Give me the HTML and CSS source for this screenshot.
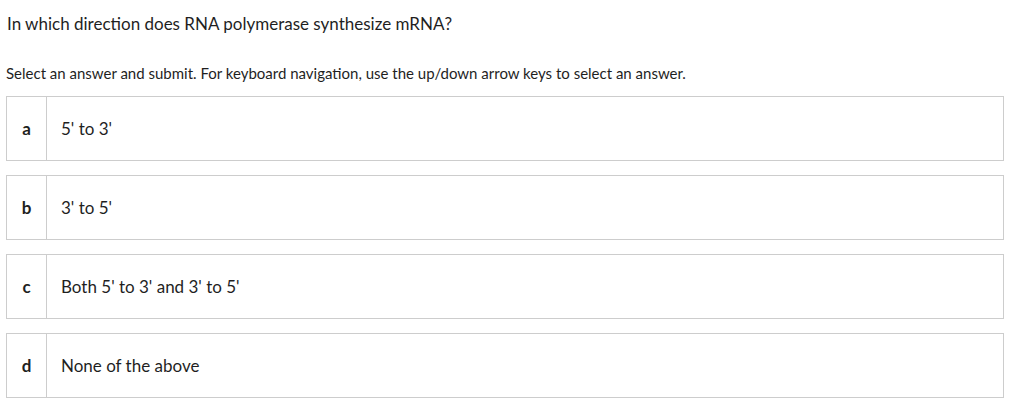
FILE: index.html
```html
<!DOCTYPE html>
<html lang="en">
<head>
<meta charset="utf-8">
<title>Question</title>
<link rel="stylesheet" href="styles.css">
</head>
<body>
<main class="question">
  <h1 class="prompt">In which direction does RNA polymerase synthesize mRNA?</h1>
  <p class="instructions">Select an answer and submit. For keyboard navigation, use the up/down arrow keys to select an answer.</p>
  <ul class="answers">
    <li class="answer"><span class="letter">a</span><span class="text">5' to 3'</span></li>
    <li class="answer"><span class="letter">b</span><span class="text">3' to 5'</span></li>
    <li class="answer"><span class="letter">c</span><span class="text">Both 5' to 3' and 3' to 5'</span></li>
    <li class="answer"><span class="letter">d</span><span class="text">None of the above</span></li>
  </ul>
</main>
</body>
</html>
```
FILE: styles.css
```css
html, body {
  margin: 0;
  padding: 0;
  background: #ffffff;
}
body {
  font-family: "Lato", "Source Sans Pro", "Open Sans", sans-serif;
  color: #1f1f1f;
}
.question {
  padding: 12px 20px 0 6px;
}
.prompt {
  margin: 0 0 0 1px;
  font-size: 17px;
  font-weight: 400;
  line-height: 24px;
}
.instructions {
  margin: 27px 0 0 0;
  font-size: 15px;
  line-height: 20px;
}
.answers {
  list-style: none;
  margin: 13px 0 0 0;
  padding: 0;
  display: flex;
  flex-direction: column;
  gap: 14px;
}
.answer {
  display: flex;
  height: 65px;
  box-sizing: border-box;
  border: 1px solid #cdcdcd;
  font-size: 17px;
  line-height: 24px;
}
.letter {
  width: 39px;
  flex: none;
  border-right: 1px solid #cdcdcd;
  display: flex;
  align-items: center;
  justify-content: center;
  font-weight: 700;
  padding-top: 1px;
}
.text {
  display: flex;
  align-items: center;
  padding-left: 14px;
  padding-top: 1px;
}
```
